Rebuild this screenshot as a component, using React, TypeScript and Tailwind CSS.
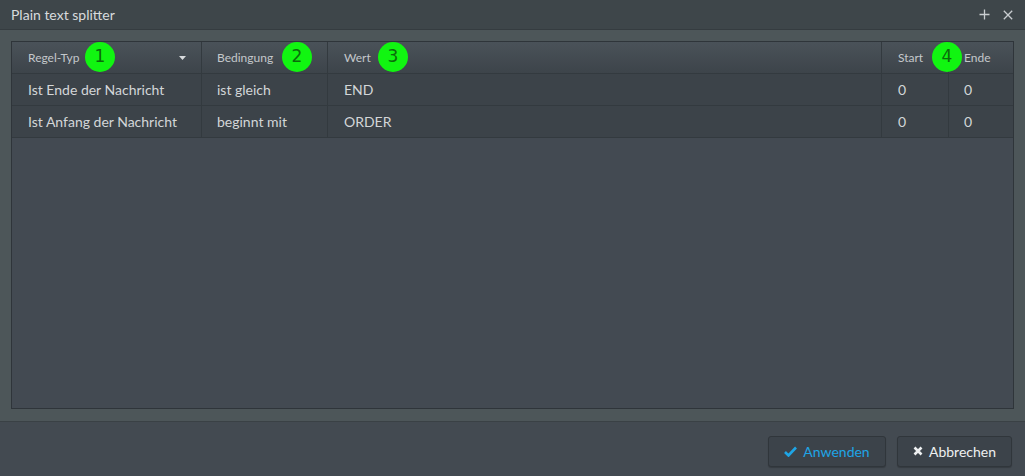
import React from "react";

const Badge = ({ n, className = "" }: { n: number; className?: string }) => (
  <span
    className={
      "absolute flex h-[30px] w-[30px] items-center justify-center rounded-full bg-[#11f511] text-[17px] text-[#0b6a0b] " +
      className
    }
    style={{ fontFamily: "'DejaVu Sans', sans-serif" }}
  >
    {n}
  </span>
);

const rows = [
  ["Ist Ende der Nachricht", "ist gleich", "END", "0", "0"],
  ["Ist Anfang der Nachricht", "beginnt mit", "ORDER", "0", "0"],
];

export default function App() {
  return (
    <div
      className="flex h-[476px] w-[1025px] flex-col bg-[#4d5659] text-[#d3d6d8]"
      style={{ fontFamily: "Lato, 'Open Sans', sans-serif" }}
    >
      <div className="flex h-[30px] shrink-0 items-center justify-between border-b border-[#353c40] bg-[#3e464a] pl-[11px] pr-[12px]">
        <span className="text-[14px] text-[#d8dbdd]">Plain text splitter</span>
        <div className="flex items-center gap-[13px] text-[#c9cdd0]">
          <svg width="11" height="11" viewBox="0 0 11 11">
            <path d="M5.5 0.5v10M0.5 5.5h10" stroke="currentColor" strokeWidth="1.3" />
          </svg>
          <svg width="10" height="10" viewBox="0 0 10 10">
            <path d="M0.8 0.8l8.4 8.4M9.2 0.8l-8.4 8.4" stroke="currentColor" strokeWidth="1.3" />
          </svg>
        </div>
      </div>

      <div className="flex-1 px-[11px] pb-[12px] pt-[11px]">
        <div className="h-full border border-[#2f353a] bg-[#434a52]">
          <div className="relative flex h-[32px] border-b border-[#333a3f] bg-gradient-to-b from-[#4a5259] to-[#3d444a] text-[12px] text-[#c4c8cb]">
            <div className="relative flex w-[190px] items-center border-r border-[#333a3f] pl-[16px]">
              Regel-Typ
              <svg className="absolute left-[167px] top-[14px]" width="7" height="4" viewBox="0 0 7 4">
                <path d="M0 0h7L3.5 4z" fill="#d8dbdd" />
              </svg>
              <Badge n={1} className="left-[73px] top-[0px]" />
            </div>
            <div className="relative flex w-[126px] items-center border-r border-[#333a3f] pl-[15px]">
              Bedingung
              <Badge n={2} className="left-[80px] top-[0px]" />
            </div>
            <div className="relative flex flex-1 items-center border-r border-[#333a3f] pl-[16px]">
              Wert
              <Badge n={3} className="left-[50px] top-[0px]" />
            </div>
            <div className="flex w-[67px] items-center border-r border-[#333a3f] pl-[16px]">Start</div>
            <div className="flex w-[64px] items-center pl-[15px]">Ende</div>
            <Badge n={4} className="left-[920px] top-[0px]" />
          </div>
          {rows.map((r, i) => (
            <div key={i} className="flex h-[32px] border-b border-[#333a3f] bg-[#3c4349] text-[14px]">
              <div className="flex w-[190px] items-center border-r border-[#333a3f] pl-[16px]">{r[0]}</div>
              <div className="flex w-[126px] items-center border-r border-[#333a3f] pl-[15px]">{r[1]}</div>
              <div className="flex flex-1 items-center border-r border-[#333a3f] pl-[16px]">{r[2]}</div>
              <div className="flex w-[67px] items-center border-r border-[#333a3f] pl-[16px]">{r[3]}</div>
              <div className="flex w-[64px] items-center pl-[15px]">{r[4]}</div>
            </div>
          ))}
        </div>
      </div>

      <div className="flex h-[55px] shrink-0 items-center justify-end gap-[11px] border-t border-[#3a4145] bg-[#434a51] pr-[13px] pt-[4px]">
        <button className="flex h-[31px] w-[118px] items-center justify-center gap-[6px] rounded-[3px] border border-[#30363b] bg-[#3c434a] text-[14px] text-[#1ea5e6] shadow-[0_1px_1px_rgba(0,0,0,0.2)]">
          <svg width="13" height="11" viewBox="0 0 13 11">
            <path d="M1 6l3.5 3.5L12 1.5" stroke="#1ea5e6" strokeWidth="2.6" fill="none" />
          </svg>
          Anwenden
        </button>
        <button className="flex h-[31px] w-[115px] items-center justify-center gap-[6px] rounded-[3px] border border-[#30363b] bg-[#3c434a] text-[14px] text-[#eef0f1] shadow-[0_1px_1px_rgba(0,0,0,0.2)]">
          <svg width="10" height="10" viewBox="0 0 10 10">
            <path d="M1.5 1.5l7 7M8.5 1.5l-7 7" stroke="#eef0f1" strokeWidth="2.6" />
          </svg>
          Abbrechen
        </button>
      </div>
    </div>
  );
}
